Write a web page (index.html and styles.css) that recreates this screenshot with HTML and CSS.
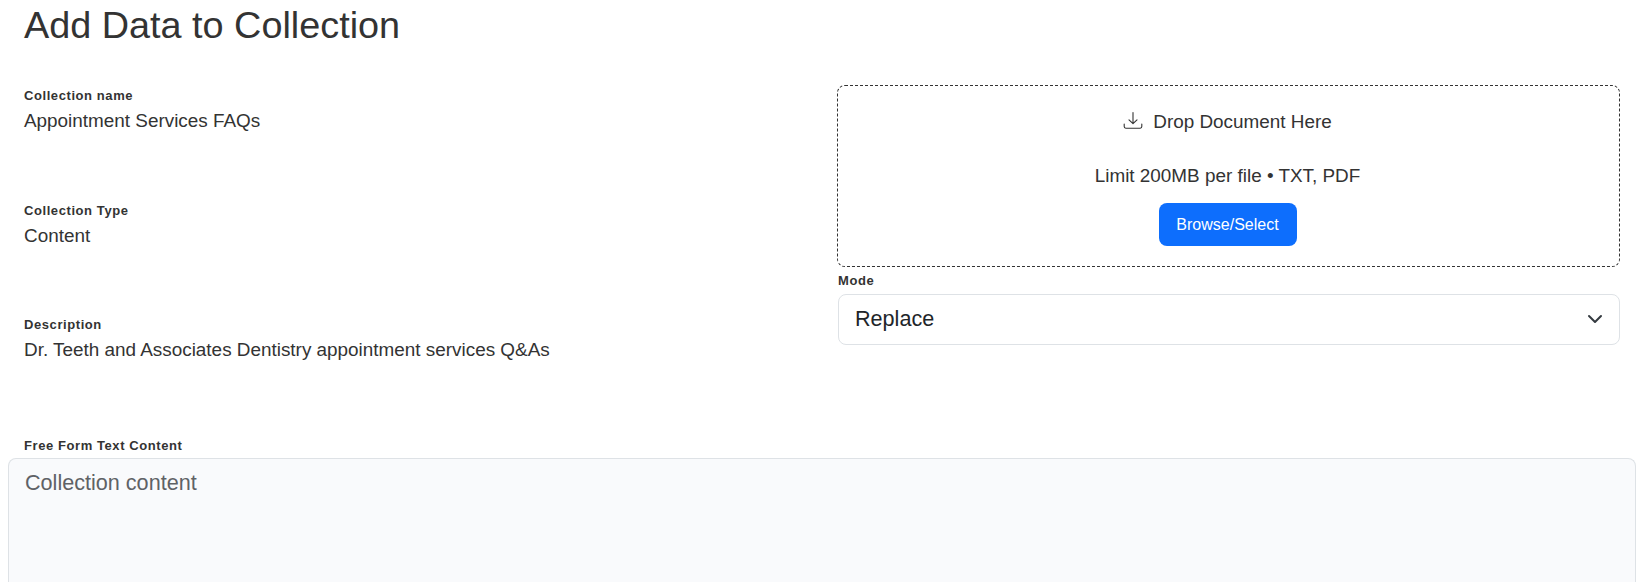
FILE: index.html
```html
<!doctype html>
<html lang="en">
<head>
    <meta charset="utf-8">
    <title>Add Data to Collection</title>
    <link rel="stylesheet" href="styles.css">
</head>
<body>
    <h1 class="title">Add Data to Collection</h1>
    <div class="columns">
        <div class="details">
            <div class="field">
                <label class="label">Collection name</label>
                <div class="value">Appointment Services FAQs</div>
            </div>
            <div class="field">
                <label class="label">Collection Type</label>
                <div class="value">Content</div>
            </div>
            <div class="field">
                <label class="label">Description</label>
                <div class="value">Dr. Teeth and Associates Dentistry appointment services Q&amp;As</div>
            </div>
        </div>
        <div class="upload">
            <div class="dropzone">
                <div class="drop-title">
                    <svg class="drop-icon" width="20" height="20" viewBox="0 0 20 20" fill="none" stroke="currentColor" stroke-width="1.1" stroke-linecap="round" stroke-linejoin="round">
                        <path d="M10 1.5v11M6 8.8l4 3.9 4-3.9"/>
                        <path d="M1.2 13v2.6c0 1 .7 1.6 1.6 1.6h14.4c.9 0 1.6-.6 1.6-1.6V13"/>
                    </svg>
                    <span>Drop Document Here</span>
                </div>
                <div class="drop-limit">Limit 200MB per file • TXT, PDF</div>
                <button class="browse" type="button">Browse/Select</button>
            </div>
            <label class="label mode-label">Mode</label>
            <div class="select">
                <span>Replace</span>
                <svg class="chevron" width="16" height="16" viewBox="0 0 16 16" fill="none" stroke="#343a40" stroke-width="2" stroke-linecap="round" stroke-linejoin="round">
                    <path d="M2 5l6 6 6-6"/>
                </svg>
            </div>
        </div>
    </div>
    <label class="label content-label">Free Form Text Content</label>
    <div class="content-box">Collection content</div>
</body>
</html>
```

FILE: styles.css
```css
* {
    box-sizing: border-box;
    padding: 0;
    margin: 0;
}
html, body {
    height: 582px;
    overflow: hidden;
}
body {
    display: flex;
    flex-direction: column;
    background: #fff;
    color: #333;
    font-family: "Liberation Sans", Arial, sans-serif;
    font-size: 18.9px;
    padding: 0 8px;
}
.title {
    flex: none;
    font-size: 37.8px;
    font-weight: 400;
    line-height: 50px;
    padding-left: 16px;
    height: 85px;
}
.columns {
    flex: none;
    display: flex;
    gap: 21px;
}
.details {
    width: 808px;
    padding-left: 16px;
    padding-top: 3px;
}
.field {
    height: 114.5px;
}
.label {
    display: block;
    font-size: 13px;
    font-weight: 700;
    letter-spacing: .58px;
    line-height: 16px;
}
.value {
    line-height: 24px;
    margin-top: 5px;
}
.upload {
    width: 783px;
}
.dropzone {
    height: 182px;
    padding-right: 2px;
    border: 1px dashed #333;
    border-radius: 8px;
    display: flex;
    flex-direction: column;
    align-items: center;
}
.drop-title {
    display: flex;
    align-items: center;
    gap: 10px;
    height: 24px;
    margin-top: 24px;
}
.drop-icon {
    margin-top: -3px;
}
.drop-limit {
    line-height: 24px;
    margin-top: 30px;
}
.browse {
    width: 138px;
    height: 43px;
    margin-top: 15px;
    background: #0d6efd;
    color: #fff;
    border: 0;
    border-radius: 8px;
    font-family: inherit;
    font-size: 16px;
}
.mode-label {
    margin-top: 6px;
    margin-left: 1px;
}
.select {
    display: flex;
    align-items: center;
    justify-content: space-between;
    height: 51px;
    margin-top: 5px;
    margin-left: 1px;
    padding: 0 16px 2px;
    border: 1px solid #dee2e6;
    border-radius: 8px;
    color: #212529;
    font-size: 21.6px;
}
.content-label {
    flex: none;
    padding-left: 16px;
    margin-top: 6px;
}
.content-box {
    flex: 1;
    margin-top: 4px;
    padding: 11px 16px;
    background: #f9fafc;
    border: 1px solid #dee2e6;
    border-bottom: 0;
    border-radius: 8px 8px 0 0;
    color: #5f6266;
    font-size: 21.6px;
}
```
